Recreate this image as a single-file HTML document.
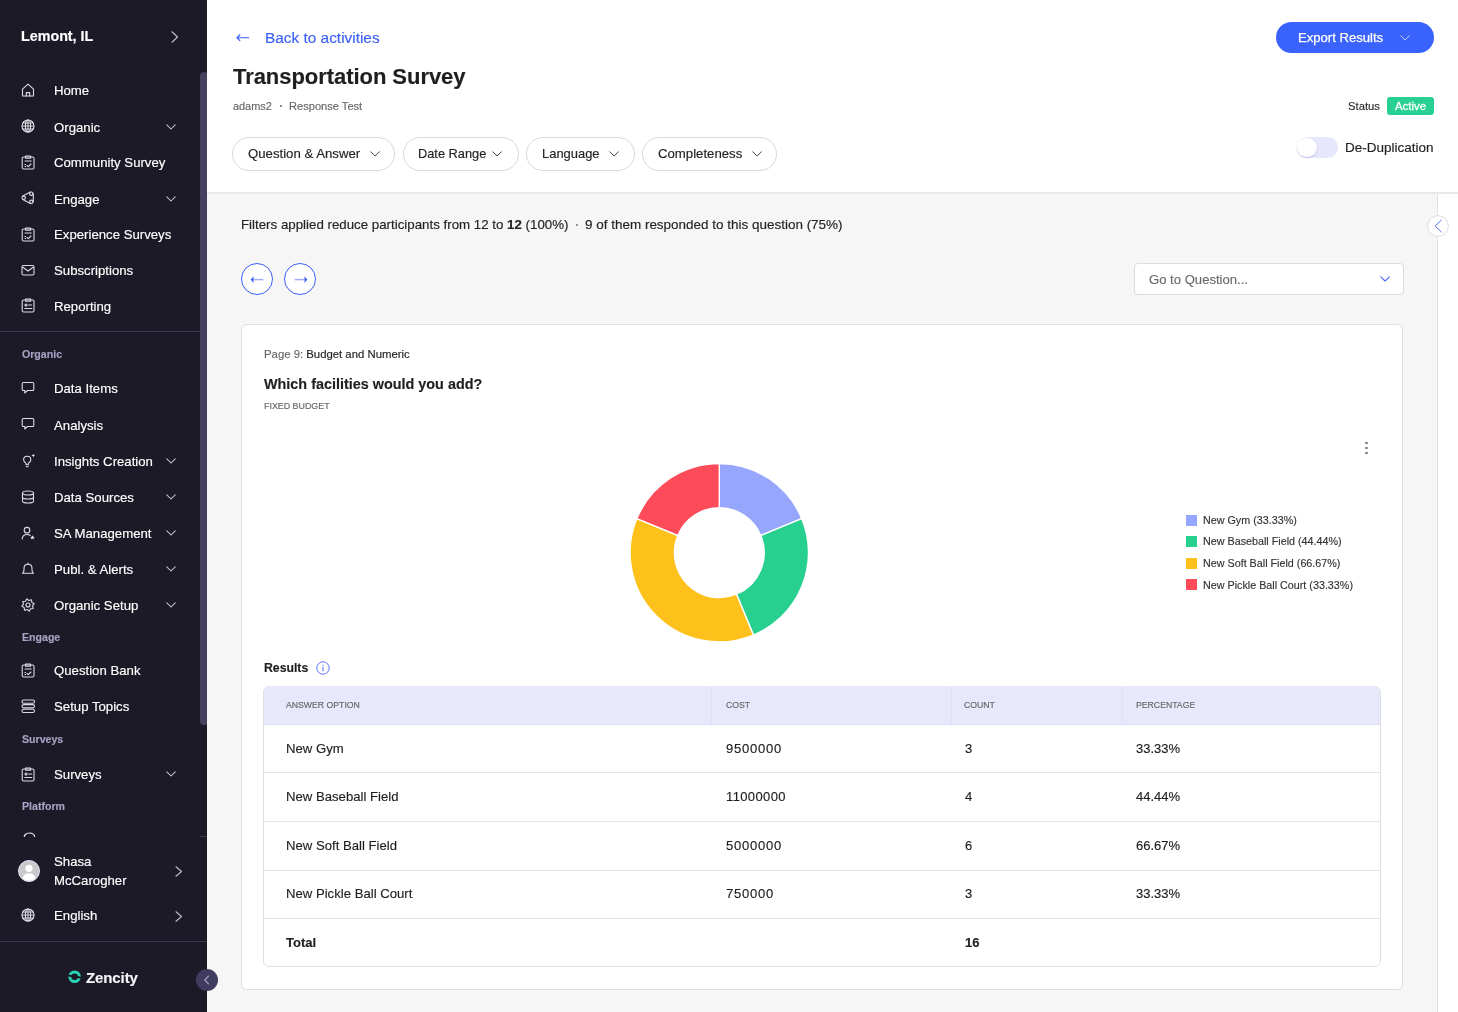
<!DOCTYPE html>
<html><head><meta charset="utf-8">
<style>
*{box-sizing:border-box;margin:0;padding:0}
html,body{width:1458px;height:1012px;overflow:hidden;background:#fff;font-family:"Liberation Sans",sans-serif;color:#1f1f1f;position:relative}
.a{position:absolute}
.t{position:absolute;white-space:nowrap;will-change:transform;-webkit-text-stroke-width:0.15px}
</style></head>
<body>
<div class="a" style="left:0px;top:0px;width:207px;height:1012px;background:#1c1a27"></div>
<div class="t " style="left:21px;top:29.10px;font-size:14.3px;line-height:14.3px;font-weight:bold;color:#fff;">Lemont, IL</div>
<svg class="a" style="left:171px;top:30.5px;" width="8" height="12" viewBox="0 0 8 12"><path d="M1 0.8 L6.5 6.0 L1 11.2" fill="none" stroke="#b9b9c4" stroke-width="1.2" stroke-linecap="round" stroke-linejoin="round"/></svg>
<svg class="a" style="left:20.8px;top:82.5px;" width="15" height="15" viewBox="0 0 15 15"><path d="M1.5 6.2 L7 1.2 L12.5 6.2 V13 H1.5 Z" fill="none" stroke="#dcdce4" stroke-width="1.1" stroke-linecap="round" stroke-linejoin="round"/><path d="M5.3 13 V9.6 H8.7 V13" fill="none" stroke="#dcdce4" stroke-width="1.1" stroke-linecap="round" stroke-linejoin="round"/></svg>
<div class="t " style="left:54.3px;top:83.83px;font-size:13.2px;line-height:13.2px;font-weight:normal;color:#fff;">Home</div>
<svg class="a" style="left:20.8px;top:119.30000000000001px;" width="15" height="15" viewBox="0 0 15 15"><circle cx="7" cy="7" r="6" fill="none" stroke="#dcdce4" stroke-width="1.1" stroke-linecap="round" stroke-linejoin="round"/><ellipse cx="7" cy="7" rx="2.6" ry="6" fill="none" stroke="#dcdce4" stroke-width="1.1" stroke-linecap="round" stroke-linejoin="round"/><path d="M1 7 H13 M1.8 4 H12.2 M1.8 10 H12.2 M7 1 V13" fill="none" stroke="#dcdce4" stroke-width="1.1" stroke-linecap="round" stroke-linejoin="round"/></svg>
<div class="t " style="left:54.3px;top:120.63px;font-size:13.2px;line-height:13.2px;font-weight:normal;color:#fff;">Organic</div>
<svg class="a" style="left:166px;top:123.60000000000001px;" width="10" height="6" viewBox="0 0 10 6"><path d="M0.8 0.8 L5.0 5 L9.2 0.8" fill="none" stroke="#c9c9d2" stroke-width="1.05" stroke-linecap="round" stroke-linejoin="round"/></svg>
<svg class="a" style="left:20.8px;top:154.5px;" width="15" height="15" viewBox="0 0 15 15"><rect x="1.2" y="2" width="11.8" height="12" rx="1.5" fill="none" stroke="#dcdce4" stroke-width="1.1" stroke-linecap="round" stroke-linejoin="round"/><path d="M4.6 1 H9.6 V3.2 H4.6 Z" fill="none" stroke="#dcdce4" stroke-width="1.1" stroke-linecap="round" stroke-linejoin="round"/><path d="M4 6 H10.2" fill="none" stroke="#dcdce4" stroke-width="1.1" stroke-linecap="round" stroke-linejoin="round"/><path d="M6 10.5 L7.3 11.6 L10 9" fill="none" stroke="#dcdce4" stroke-width="1.1" stroke-linecap="round" stroke-linejoin="round"/><path d="M4 9.5 h0.6 M4 11.5 h0.6" fill="none" stroke="#dcdce4" stroke-width="1.1" stroke-linecap="round" stroke-linejoin="round"/></svg>
<div class="t " style="left:54.3px;top:155.83px;font-size:13.2px;line-height:13.2px;font-weight:normal;color:#fff;">Community Survey</div>
<svg class="a" style="left:20.8px;top:191.3px;" width="15" height="15" viewBox="0 0 15 15"><path d="M1.75 5.04 L9.35 0.94 M1.77 8.57 L9.37 12.57 M12.3 2.7 V10.8" fill="none" stroke="#dcdce4" stroke-width="1.1" stroke-linecap="round" stroke-linejoin="round"/><circle cx="2.7" cy="6.8" r="1.7" fill="none" stroke="#dcdce4" stroke-width="1.1" stroke-linecap="round" stroke-linejoin="round"/><circle cx="10.3" cy="2.7" r="1.7" fill="none" stroke="#dcdce4" stroke-width="1.1" stroke-linecap="round" stroke-linejoin="round"/><circle cx="10.3" cy="10.8" r="1.7" fill="none" stroke="#dcdce4" stroke-width="1.1" stroke-linecap="round" stroke-linejoin="round"/></svg>
<div class="t " style="left:54.3px;top:192.63px;font-size:13.2px;line-height:13.2px;font-weight:normal;color:#fff;">Engage</div>
<svg class="a" style="left:166px;top:195.60000000000002px;" width="10" height="6" viewBox="0 0 10 6"><path d="M0.8 0.8 L5.0 5 L9.2 0.8" fill="none" stroke="#c9c9d2" stroke-width="1.05" stroke-linecap="round" stroke-linejoin="round"/></svg>
<svg class="a" style="left:20.8px;top:226.5px;" width="15" height="15" viewBox="0 0 15 15"><rect x="1.2" y="2" width="11.8" height="12" rx="1.5" fill="none" stroke="#dcdce4" stroke-width="1.1" stroke-linecap="round" stroke-linejoin="round"/><path d="M4.6 1 H9.6 V3.2 H4.6 Z" fill="none" stroke="#dcdce4" stroke-width="1.1" stroke-linecap="round" stroke-linejoin="round"/><path d="M4 6 H10.2" fill="none" stroke="#dcdce4" stroke-width="1.1" stroke-linecap="round" stroke-linejoin="round"/><path d="M6 10.5 L7.3 11.6 L10 9" fill="none" stroke="#dcdce4" stroke-width="1.1" stroke-linecap="round" stroke-linejoin="round"/><path d="M4 9.5 h0.6 M4 11.5 h0.6" fill="none" stroke="#dcdce4" stroke-width="1.1" stroke-linecap="round" stroke-linejoin="round"/></svg>
<div class="t " style="left:54.3px;top:227.83px;font-size:13.2px;line-height:13.2px;font-weight:normal;color:#fff;">Experience Surveys</div>
<svg class="a" style="left:20.8px;top:262.5px;" width="15" height="15" viewBox="0 0 15 15"><rect x="1" y="2.5" width="12" height="9.5" rx="1.5" fill="none" stroke="#dcdce4" stroke-width="1.1" stroke-linecap="round" stroke-linejoin="round"/><path d="M1.5 4 L7 8 L12.5 4" fill="none" stroke="#dcdce4" stroke-width="1.1" stroke-linecap="round" stroke-linejoin="round"/></svg>
<div class="t " style="left:54.3px;top:263.83px;font-size:13.2px;line-height:13.2px;font-weight:normal;color:#fff;">Subscriptions</div>
<svg class="a" style="left:20.8px;top:298.3px;" width="15" height="15" viewBox="0 0 15 15"><rect x="1.2" y="2" width="11.8" height="12" rx="1.5" fill="none" stroke="#dcdce4" stroke-width="1.1" stroke-linecap="round" stroke-linejoin="round"/><path d="M4.6 1 H9.6 V3.2 H4.6 Z" fill="none" stroke="#dcdce4" stroke-width="1.1" stroke-linecap="round" stroke-linejoin="round"/><path d="M7.5 7 H10.7 M3.8 10.5 H10.7" fill="none" stroke="#dcdce4" stroke-width="1.1" stroke-linecap="round" stroke-linejoin="round"/><circle cx="5" cy="7" r="1" fill="none" stroke="#dcdce4" stroke-width="1.1" stroke-linecap="round" stroke-linejoin="round"/></svg>
<div class="t " style="left:54.3px;top:299.63px;font-size:13.2px;line-height:13.2px;font-weight:normal;color:#fff;">Reporting</div>
<div class="a" style="left:0px;top:331px;width:200px;height:1px;background:#3b3754"></div>
<div class="t " style="left:21.8px;top:348.83px;font-size:10.6px;line-height:10.6px;font-weight:bold;color:#a6a2c4;">Organic</div>
<svg class="a" style="left:20.8px;top:381.0px;" width="15" height="15" viewBox="0 0 15 15"><path d="M2.5 1.5 H11.5 Q12.8 1.5 12.8 2.8 V8.2 Q12.8 9.5 11.5 9.5 H6.5 L3.8 12 V9.5 H2.5 Q1.2 9.5 1.2 8.2 V2.8 Q1.2 1.5 2.5 1.5 Z" fill="none" stroke="#dcdce4" stroke-width="1.1" stroke-linecap="round" stroke-linejoin="round"/></svg>
<div class="t " style="left:54.3px;top:382.33px;font-size:13.2px;line-height:13.2px;font-weight:normal;color:#fff;">Data Items</div>
<svg class="a" style="left:20.8px;top:417.2px;" width="15" height="15" viewBox="0 0 15 15"><path d="M2.5 1.5 H11.5 Q12.8 1.5 12.8 2.8 V8.2 Q12.8 9.5 11.5 9.5 H6.5 L3.8 12 V9.5 H2.5 Q1.2 9.5 1.2 8.2 V2.8 Q1.2 1.5 2.5 1.5 Z" fill="none" stroke="#dcdce4" stroke-width="1.1" stroke-linecap="round" stroke-linejoin="round"/></svg>
<div class="t " style="left:54.3px;top:418.53px;font-size:13.2px;line-height:13.2px;font-weight:normal;color:#fff;">Analysis</div>
<svg class="a" style="left:20.8px;top:454.0px;" width="15" height="15" viewBox="0 0 15 15"><path d="M5 10.8 V9.3 Q2.6 8 2.6 5.6 Q2.6 2.2 6.2 2.2 Q9.8 2.2 9.8 5.6 Q9.8 8 7.4 9.3 V10.8 Z" fill="none" stroke="#dcdce4" stroke-width="1.1" stroke-linecap="round" stroke-linejoin="round"/><path d="M5.2 12.8 H7.2" fill="none" stroke="#dcdce4" stroke-width="1.1" stroke-linecap="round" stroke-linejoin="round"/><path d="M12.3 -0.5 Q12.5 1.3 14.3 1.5 Q12.5 1.7 12.3 3.5 Q12.1 1.7 10.3 1.5 Q12.1 1.3 12.3 -0.5 Z" fill="#dcdce4"/></svg>
<div class="t " style="left:54.3px;top:455.33px;font-size:13.2px;line-height:13.2px;font-weight:normal;color:#fff;">Insights Creation</div>
<svg class="a" style="left:166px;top:458.3px;" width="10" height="6" viewBox="0 0 10 6"><path d="M0.8 0.8 L5.0 5 L9.2 0.8" fill="none" stroke="#c9c9d2" stroke-width="1.05" stroke-linecap="round" stroke-linejoin="round"/></svg>
<svg class="a" style="left:20.8px;top:490.1px;" width="15" height="15" viewBox="0 0 15 15"><ellipse cx="7" cy="3" rx="5.5" ry="2" fill="none" stroke="#dcdce4" stroke-width="1.1" stroke-linecap="round" stroke-linejoin="round"/><path d="M1.5 3 V11 Q1.5 13 7 13 Q12.5 13 12.5 11 V3 M1.5 7 Q1.5 9 7 9 Q12.5 9 12.5 7" fill="none" stroke="#dcdce4" stroke-width="1.1" stroke-linecap="round" stroke-linejoin="round"/></svg>
<div class="t " style="left:54.3px;top:491.43px;font-size:13.2px;line-height:13.2px;font-weight:normal;color:#fff;">Data Sources</div>
<svg class="a" style="left:166px;top:494.40000000000003px;" width="10" height="6" viewBox="0 0 10 6"><path d="M0.8 0.8 L5.0 5 L9.2 0.8" fill="none" stroke="#c9c9d2" stroke-width="1.05" stroke-linecap="round" stroke-linejoin="round"/></svg>
<svg class="a" style="left:20.8px;top:526.1px;" width="15" height="15" viewBox="0 0 15 15"><circle cx="6" cy="4.2" r="2.8" fill="none" stroke="#dcdce4" stroke-width="1.1" stroke-linecap="round" stroke-linejoin="round"/><path d="M1.2 13 Q1.5 8.5 6 8.5 Q8 8.5 9.2 9.5" fill="none" stroke="#dcdce4" stroke-width="1.1" stroke-linecap="round" stroke-linejoin="round"/><path d="M11.5 9.3 L12.2 10.8 L13.8 10.9 L12.6 11.9 L13 13.5 L11.5 12.6 L10 13.5 L10.4 11.9 L9.2 10.9 L10.8 10.8 Z" fill="#e8e8ee"/></svg>
<div class="t " style="left:54.3px;top:527.43px;font-size:13.2px;line-height:13.2px;font-weight:normal;color:#fff;">SA Management</div>
<svg class="a" style="left:166px;top:530.4px;" width="10" height="6" viewBox="0 0 10 6"><path d="M0.8 0.8 L5.0 5 L9.2 0.8" fill="none" stroke="#c9c9d2" stroke-width="1.05" stroke-linecap="round" stroke-linejoin="round"/></svg>
<svg class="a" style="left:20.8px;top:561.9px;" width="15" height="15" viewBox="0 0 15 15"><path d="M1.5 11.3 H12.5 Q11 10 11 8 V6.3 Q11 2.2 7 2.2 Q3 2.2 3 6.3 V8 Q3 10 1.5 11.3 Z" fill="none" stroke="#dcdce4" stroke-width="1.1" stroke-linecap="round" stroke-linejoin="round"/><path d="M7 1 V2.2" fill="none" stroke="#dcdce4" stroke-width="1.1" stroke-linecap="round" stroke-linejoin="round"/></svg>
<div class="t " style="left:54.3px;top:563.23px;font-size:13.2px;line-height:13.2px;font-weight:normal;color:#fff;">Publ. &amp; Alerts</div>
<svg class="a" style="left:166px;top:566.1999999999999px;" width="10" height="6" viewBox="0 0 10 6"><path d="M0.8 0.8 L5.0 5 L9.2 0.8" fill="none" stroke="#c9c9d2" stroke-width="1.05" stroke-linecap="round" stroke-linejoin="round"/></svg>
<svg class="a" style="left:20.8px;top:598.1px;" width="15" height="15" viewBox="0 0 15 15"><path d="M13.18 5.77 L11.51 7.90 L12.24 10.50 L9.56 10.82 L8.23 13.18 L6.10 11.51 L3.50 12.24 L3.18 9.56 L0.82 8.23 L2.49 6.10 L1.76 3.50 L4.44 3.18 L5.77 0.82 L7.90 2.49 L10.50 1.76 L10.82 4.44 Z" fill="none" stroke="#dcdce4" stroke-width="1.1" stroke-linecap="round" stroke-linejoin="round"/><circle cx="7" cy="7" r="2" fill="none" stroke="#dcdce4" stroke-width="1.1" stroke-linecap="round" stroke-linejoin="round"/></svg>
<div class="t " style="left:54.3px;top:599.43px;font-size:13.2px;line-height:13.2px;font-weight:normal;color:#fff;">Organic Setup</div>
<svg class="a" style="left:166px;top:602.4px;" width="10" height="6" viewBox="0 0 10 6"><path d="M0.8 0.8 L5.0 5 L9.2 0.8" fill="none" stroke="#c9c9d2" stroke-width="1.05" stroke-linecap="round" stroke-linejoin="round"/></svg>
<div class="t " style="left:21.8px;top:631.83px;font-size:10.6px;line-height:10.6px;font-weight:bold;color:#a6a2c4;">Engage</div>
<svg class="a" style="left:20.8px;top:662.7px;" width="15" height="15" viewBox="0 0 15 15"><rect x="1.2" y="2" width="11.8" height="12" rx="1.5" fill="none" stroke="#dcdce4" stroke-width="1.1" stroke-linecap="round" stroke-linejoin="round"/><path d="M4.6 1 H9.6 V3.2 H4.6 Z" fill="none" stroke="#dcdce4" stroke-width="1.1" stroke-linecap="round" stroke-linejoin="round"/><path d="M4 6 H10.2" fill="none" stroke="#dcdce4" stroke-width="1.1" stroke-linecap="round" stroke-linejoin="round"/><path d="M6 10.5 L7.3 11.6 L10 9" fill="none" stroke="#dcdce4" stroke-width="1.1" stroke-linecap="round" stroke-linejoin="round"/><path d="M4 9.5 h0.6 M4 11.5 h0.6" fill="none" stroke="#dcdce4" stroke-width="1.1" stroke-linecap="round" stroke-linejoin="round"/></svg>
<div class="t " style="left:54.3px;top:664.03px;font-size:13.2px;line-height:13.2px;font-weight:normal;color:#fff;">Question Bank</div>
<svg class="a" style="left:20.8px;top:698.9px;" width="15" height="15" viewBox="0 0 15 15"><rect x="1" y="1" width="12.5" height="3.3" rx="1.6" fill="none" stroke="#dcdce4" stroke-width="1.1" stroke-linecap="round" stroke-linejoin="round"/><rect x="1" y="5.6" width="12.5" height="3.3" rx="1.6" fill="none" stroke="#dcdce4" stroke-width="1.1" stroke-linecap="round" stroke-linejoin="round"/><rect x="1" y="10.2" width="12.5" height="3.3" rx="1.6" fill="none" stroke="#dcdce4" stroke-width="1.1" stroke-linecap="round" stroke-linejoin="round"/></svg>
<div class="t " style="left:54.3px;top:700.23px;font-size:13.2px;line-height:13.2px;font-weight:normal;color:#fff;">Setup Topics</div>
<div class="t " style="left:21.8px;top:733.63px;font-size:10.6px;line-height:10.6px;font-weight:bold;color:#a6a2c4;">Surveys</div>
<svg class="a" style="left:20.8px;top:766.5px;" width="15" height="15" viewBox="0 0 15 15"><rect x="1.2" y="2" width="11.8" height="12" rx="1.5" fill="none" stroke="#dcdce4" stroke-width="1.1" stroke-linecap="round" stroke-linejoin="round"/><path d="M4.6 1 H9.6 V3.2 H4.6 Z" fill="none" stroke="#dcdce4" stroke-width="1.1" stroke-linecap="round" stroke-linejoin="round"/><path d="M7.5 7 H10.7 M3.8 10.5 H10.7" fill="none" stroke="#dcdce4" stroke-width="1.1" stroke-linecap="round" stroke-linejoin="round"/><circle cx="5" cy="7" r="1" fill="none" stroke="#dcdce4" stroke-width="1.1" stroke-linecap="round" stroke-linejoin="round"/></svg>
<div class="t " style="left:54.3px;top:767.83px;font-size:13.2px;line-height:13.2px;font-weight:normal;color:#fff;">Surveys</div>
<svg class="a" style="left:166px;top:770.8px;" width="10" height="6" viewBox="0 0 10 6"><path d="M0.8 0.8 L5.0 5 L9.2 0.8" fill="none" stroke="#c9c9d2" stroke-width="1.05" stroke-linecap="round" stroke-linejoin="round"/></svg>
<div class="t " style="left:21.8px;top:800.73px;font-size:10.6px;line-height:10.6px;font-weight:bold;color:#a6a2c4;">Platform</div>
<div class="a" style="left:0;top:826px;width:200px;height:10.5px;overflow:hidden">
<svg class="a" style="left:21.5px;top:6px" width="15" height="15" viewBox="0 0 15 15"><path d="M2 7 Q2 1 7.5 1 Q13 1 13 7" fill="none" stroke="#e8e8ee" stroke-width="1.2"/></svg>
</div>
<div class="a" style="left:200px;top:72px;width:8px;height:653px;background:#47415f;border-radius:4px"></div>
<div class="a" style="left:200px;top:835.5px;width:8px;height:1.2px;background:#3b3754"></div>
<div class="a" style="left:206.5px;top:72px;width:1.5px;height:764px;background:#2c2a3c"></div>
<svg class="a" style="left:18px;top:860px" width="22" height="22" viewBox="0 0 22 22"><circle cx="11" cy="11" r="10.5" fill="#c9c9cc" stroke="#dfe3f5" stroke-width="1"/><circle cx="11" cy="8.3" r="3.6" fill="#fff"/><path d="M4.3 18.2 Q6 13.2 11 13.2 Q16 13.2 17.7 18.2 Q14.8 20.8 11 20.8 Q7.2 20.8 4.3 18.2 Z" fill="#fff"/></svg>
<div class="t " style="left:54.3px;top:854.83px;font-size:13.2px;line-height:13.2px;font-weight:normal;color:#fff;">Shasa</div>
<div class="t " style="left:54.3px;top:873.73px;font-size:13.2px;line-height:13.2px;font-weight:normal;color:#fff;">McCarogher</div>
<svg class="a" style="left:174.5px;top:865.5px;" width="8" height="11" viewBox="0 0 8 11"><path d="M1 0.8 L6.5 5.5 L1 10.2" fill="none" stroke="#b9b9c4" stroke-width="1.2" stroke-linecap="round" stroke-linejoin="round"/></svg>
<svg class="a" style="left:20.8px;top:908px;" width="15" height="15" viewBox="0 0 15 15"><circle cx="7" cy="7" r="6" fill="none" stroke="#dcdce4" stroke-width="1.1" stroke-linecap="round" stroke-linejoin="round"/><ellipse cx="7" cy="7" rx="2.6" ry="6" fill="none" stroke="#dcdce4" stroke-width="1.1" stroke-linecap="round" stroke-linejoin="round"/><path d="M1 7 H13 M1.8 4 H12.2 M1.8 10 H12.2 M7 1 V13" fill="none" stroke="#dcdce4" stroke-width="1.1" stroke-linecap="round" stroke-linejoin="round"/></svg>
<div class="t " style="left:54.3px;top:908.73px;font-size:13.2px;line-height:13.2px;font-weight:normal;color:#fff;">English</div>
<svg class="a" style="left:174.5px;top:910.5px;" width="8" height="11" viewBox="0 0 8 11"><path d="M1 0.8 L6.5 5.5 L1 10.2" fill="none" stroke="#b9b9c4" stroke-width="1.2" stroke-linecap="round" stroke-linejoin="round"/></svg>
<div class="a" style="left:0px;top:940.5px;width:207px;height:1.2px;background:#3b3754"></div>
<svg class="a" style="left:68px;top:970px" width="14" height="14" viewBox="0 0 14 14"><circle cx="6.6" cy="6.8" r="4.8" fill="none" stroke="#2bd3b5" stroke-width="3"/><path d="M-1 4.3 L15 6.9 L15 9.0 L-1 6.4 Z" fill="#1c1a27"/></svg>
<div class="t " style="left:85.5px;top:969.80px;font-size:15px;line-height:15px;font-weight:bold;color:#f4f4f6;letter-spacing:-0.1px">Zencity</div>
<div class="a" style="left:207px;top:0px;width:1251px;height:193px;background:#fff"></div>
<div class="a" style="left:207px;top:192px;width:1251px;height:2px;background:#e8e8e8"></div>
<div class="a" style="left:207px;top:194px;width:1231px;height:818px;background:#f6f6f6"></div>
<div class="a" style="left:1437px;top:194px;width:1.2px;height:818px;background:#e2e2e2"></div>
<div class="a" style="left:1438.2px;top:194px;width:20px;height:818px;background:#fff"></div>
<svg class="a" style="left:235px;top:32px;" width="16" height="11" viewBox="0 0 16 11"><path d="M2.3 5.7 H13.8" stroke="#3a60f7" stroke-width="1.1" stroke-linecap="round"/><path d="M4.8 3 L2.1 5.7 L4.8 8.6" fill="none" stroke="#3a60f7" stroke-width="1.3" stroke-linecap="round" stroke-linejoin="round"/></svg>
<div class="t " style="left:264.9px;top:29.96px;font-size:15.4px;line-height:15.4px;font-weight:normal;color:#3a60f7;">Back to activities</div>
<div class="t " style="left:232.5px;top:65.88px;font-size:22px;line-height:22px;font-weight:bold;color:#1f1f1f;letter-spacing:-0.05px">Transportation Survey</div>
<div class="t " style="left:232.6px;top:101.17px;font-size:10.9px;line-height:10.9px;font-weight:normal;color:#666;">adams2</div>
<div class="a" style="left:280.2px;top:105.3px;width:1.6px;height:1.6px;background:#666;border-radius:1px"></div>
<div class="t " style="left:289.2px;top:101.00px;font-size:11.1px;line-height:11.1px;font-weight:normal;color:#666;">Response Test</div>
<div class="a" style="left:232.2px;top:137px;width:163.2px;height:33.5px;border:1px solid #d9d9d9;border-radius:17px;background:#fff"></div>
<div class="t " style="left:247.6px;top:146.73px;font-size:13.19px;line-height:13.19px;font-weight:normal;color:#222;">Question &amp; Answer</div>
<svg class="a" style="left:369.5px;top:151.2px;" width="10.2" height="6" viewBox="0 0 10.2 6"><path d="M0.8 0.8 L5.1 5 L9.399999999999999 0.8" fill="none" stroke="#444" stroke-width="1.0" stroke-linecap="round" stroke-linejoin="round"/></svg>
<div class="a" style="left:403px;top:137px;width:115.60000000000002px;height:33.5px;border:1px solid #d9d9d9;border-radius:17px;background:#fff"></div>
<div class="t " style="left:418.4px;top:147.96px;font-size:12.8px;line-height:12.8px;font-weight:normal;color:#222;">Date Range</div>
<svg class="a" style="left:492.0px;top:151.2px;" width="10.2" height="6" viewBox="0 0 10.2 6"><path d="M0.8 0.8 L5.1 5 L9.399999999999999 0.8" fill="none" stroke="#444" stroke-width="1.0" stroke-linecap="round" stroke-linejoin="round"/></svg>
<div class="a" style="left:526px;top:137px;width:108.79999999999995px;height:33.5px;border:1px solid #d9d9d9;border-radius:17px;background:#fff"></div>
<div class="t " style="left:541.7px;top:147.84px;font-size:12.95px;line-height:12.95px;font-weight:normal;color:#222;">Language</div>
<svg class="a" style="left:609.3000000000001px;top:151.2px;" width="10.2" height="6" viewBox="0 0 10.2 6"><path d="M0.8 0.8 L5.1 5 L9.399999999999999 0.8" fill="none" stroke="#444" stroke-width="1.0" stroke-linecap="round" stroke-linejoin="round"/></svg>
<div class="a" style="left:642.2px;top:137px;width:135.19999999999993px;height:33.5px;border:1px solid #d9d9d9;border-radius:17px;background:#fff"></div>
<div class="t " style="left:658px;top:146.73px;font-size:13.2px;line-height:13.2px;font-weight:normal;color:#222;">Completeness</div>
<svg class="a" style="left:751.9000000000001px;top:151.2px;" width="10.2" height="6" viewBox="0 0 10.2 6"><path d="M0.8 0.8 L5.1 5 L9.399999999999999 0.8" fill="none" stroke="#444" stroke-width="1.0" stroke-linecap="round" stroke-linejoin="round"/></svg>
<div class="a" style="left:1276px;top:22px;width:157.6px;height:30.6px;background:#3a62fd;border-radius:16px"></div>
<div class="t " style="left:1297.7px;top:31.41px;font-size:13.1px;line-height:13.1px;font-weight:normal;color:#fff;-webkit-text-stroke:0.25px #fff">Export Results</div>
<svg class="a" style="left:1399.5px;top:35px;" width="10.2" height="6" viewBox="0 0 10.2 6"><path d="M0.8 0.8 L5.1 5 L9.399999999999999 0.8" fill="none" stroke="#d5defe" stroke-width="0.9" stroke-linecap="round" stroke-linejoin="round"/></svg>
<div class="t " style="left:1347.8px;top:100.98px;font-size:11.25px;line-height:11.25px;font-weight:normal;color:#2a2a2a;">Status</div>
<div class="a" style="left:1387px;top:97px;width:46.6px;height:18px;background:#28d193;border-radius:3px"></div>
<div class="t " style="left:1394.8px;top:100.65px;font-size:11.4px;line-height:11.4px;font-weight:normal;color:#fff;-webkit-text-stroke:0.3px #fff">Active</div>
<div class="a" style="left:1297px;top:137px;width:40.7px;height:21px;background:#e6e6fc;border-radius:11px"></div>
<div class="a" style="left:1297.2px;top:137.7px;width:19.5px;height:19.5px;background:#fff;border-radius:50%;box-shadow:0 1px 1.5px rgba(110,110,200,0.35)"></div>
<div class="t " style="left:1345px;top:141.07px;font-size:13.5px;line-height:13.5px;font-weight:normal;color:#222;">De-Duplication</div>
<svg class="a" style="left:1427px;top:215px" width="22" height="22" viewBox="0 0 22 22"><circle cx="11" cy="11" r="10.3" fill="#fff" stroke="#dedede" stroke-width="1"/><path d="M14.2 5.2 L8.2 11 L14.2 16.8" fill="none" stroke="#4f6cf7" stroke-width="1.0" stroke-linecap="round" stroke-linejoin="round"/></svg>
<div class="t " style="left:240.8px;top:218.14px;font-size:13.3px;line-height:13.3px;font-weight:normal;color:#222;">Filters applied reduce participants from 12 to <b>12</b> (100%)</div>
<div class="a" style="left:576.3px;top:224.2px;width:1.8px;height:1.8px;background:#777;border-radius:1px"></div>
<div class="t " style="left:585.2px;top:218.00px;font-size:13.47px;line-height:13.47px;font-weight:normal;color:#222;">9 of them responded to this question (75%)</div>
<div class="a" style="left:240.8px;top:262.8px;width:32.4px;height:32.4px;background:#fff;border:1px solid #3d5ef8;border-radius:50%"></div>
<svg class="a" style="left:240.5px;top:262.5px" width="33" height="33" viewBox="0 0 33 33"><path d="M10.5 16.6 H22.3" stroke="#9fadfb" stroke-width="1.5"/><path d="M9.6 16.6 L12.8 13.2 L12.2 16.6 L12.8 20 Z" fill="#3d5ef8"/></svg>
<div class="a" style="left:283.8px;top:262.8px;width:32.4px;height:32.4px;background:#fff;border:1px solid #3d5ef8;border-radius:50%"></div>
<svg class="a" style="left:283.5px;top:262.5px" width="33" height="33" viewBox="0 0 33 33"><path d="M10.7 16.6 H22.5" stroke="#9fadfb" stroke-width="1.5"/><path d="M23.4 16.6 L20.2 13.2 L20.8 16.6 L20.2 20 Z" fill="#3d5ef8"/></svg>
<div class="a" style="left:1133.5px;top:263.3px;width:270px;height:31.3px;background:#fff;border:1px solid #dcdcdc;border-radius:4px"></div>
<div class="t " style="left:1149px;top:273.11px;font-size:13.1px;line-height:13.1px;font-weight:normal;color:#6b6b6b;">Go to Question...</div>
<svg class="a" style="left:1380.3px;top:275.8px;" width="10.2" height="6" viewBox="0 0 10.2 6"><path d="M0.8 0.8 L5.1 5 L9.399999999999999 0.8" fill="none" stroke="#4d6af7" stroke-width="1.1" stroke-linecap="round" stroke-linejoin="round"/></svg>
<div class="a" style="left:241px;top:324.4px;width:1162px;height:666px;background:#fff;border:1px solid #dedede;border-radius:6px"></div>
<div class="t " style="left:263.7px;top:348.99px;font-size:11.35px;line-height:11.35px;font-weight:normal;color:#222;"><span style="color:#666">Page 9:</span> Budget and Numeric</div>
<div class="t " style="left:263.7px;top:377.21px;font-size:14.4px;line-height:14.4px;font-weight:bold;color:#1f1f1f;">Which facilities would you add?</div>
<div class="t " style="left:263.7px;top:401.77px;font-size:8.9px;line-height:8.9px;font-weight:normal;color:#666;">FIXED BUDGET</div>
<div class="a" style="left:1365.2px;top:441.7px;width:2.6px;height:2.6px;background:#7a7a7a;border-radius:50%"></div>
<div class="a" style="left:1365.2px;top:446.7px;width:2.6px;height:2.6px;background:#7a7a7a;border-radius:50%"></div>
<div class="a" style="left:1365.2px;top:451.7px;width:2.6px;height:2.6px;background:#7a7a7a;border-radius:50%"></div>
<svg class="a" style="left:0;top:0" width="1458" height="1012"><path d="M719.30 463.50 A89.2 89.2 0 0 1 801.71 518.56 L760.78 535.52 A44.9 44.9 0 0 0 719.30 507.80 Z" fill="#97a6fd" stroke="#fff" stroke-width="1.4" stroke-linejoin="miter"/><path d="M801.71 518.56 A89.2 89.2 0 0 1 753.44 635.11 L736.48 594.18 A44.9 44.9 0 0 0 760.78 535.52 Z" fill="#27d08f" stroke="#fff" stroke-width="1.4" stroke-linejoin="miter"/><path d="M753.44 635.11 A89.2 89.2 0 0 1 636.89 518.56 L677.82 535.52 A44.9 44.9 0 0 0 736.48 594.18 Z" fill="#fec11b" stroke="#fff" stroke-width="1.4" stroke-linejoin="miter"/><path d="M636.89 518.56 A89.2 89.2 0 0 1 719.30 463.50 L719.30 507.80 A44.9 44.9 0 0 0 677.82 535.52 Z" fill="#fe4b5a" stroke="#fff" stroke-width="1.4" stroke-linejoin="miter"/></svg>
<div class="a" style="left:1186px;top:514.8px;width:11px;height:11px;background:#97a6fd"></div>
<div class="t " style="left:1203.3px;top:514.90px;font-size:10.75px;line-height:10.75px;font-weight:normal;color:#333;">New Gym (33.33%)</div>
<div class="a" style="left:1186px;top:536.3499999999999px;width:11px;height:11px;background:#27d08f"></div>
<div class="t " style="left:1203.3px;top:536.45px;font-size:10.75px;line-height:10.75px;font-weight:normal;color:#333;">New Baseball Field (44.44%)</div>
<div class="a" style="left:1186px;top:557.9px;width:11px;height:11px;background:#fec11b"></div>
<div class="t " style="left:1203.3px;top:558.00px;font-size:10.75px;line-height:10.75px;font-weight:normal;color:#333;">New Soft Ball Field (66.67%)</div>
<div class="a" style="left:1186px;top:579.4499999999999px;width:11px;height:11px;background:#fe4b5a"></div>
<div class="t " style="left:1203.3px;top:579.55px;font-size:10.75px;line-height:10.75px;font-weight:normal;color:#333;">New Pickle Ball Court (33.33%)</div>
<div class="t " style="left:263.5px;top:661.73px;font-size:12.25px;line-height:12.25px;font-weight:bold;color:#1f1f1f;">Results</div>
<svg class="a" style="left:315.5px;top:661.3px" width="14" height="14" viewBox="0 0 14 14"><circle cx="7" cy="7" r="6.2" fill="none" stroke="#5a74f7" stroke-width="1"/><path d="M7 6 V10.3" stroke="#5a74f7" stroke-width="1.1"/><circle cx="7" cy="4.1" r="0.7" fill="#5a74f7"/></svg>
<div class="a" style="left:263px;top:685.8px;width:1117.5px;height:281.20000000000005px;background:#fff;border:1px solid #e0e0e0;border-radius:6px;overflow:hidden"></div>
<div class="a" style="left:263.5px;top:686.3px;width:1116.5px;height:38px;background:#e7e8fc;border-radius:6px 6px 0 0"></div>
<div class="a" style="left:710.7px;top:686.8px;width:1px;height:37.5px;background:#dfe0f6"></div>
<div class="a" style="left:950.7px;top:686.8px;width:1px;height:37.5px;background:#dfe0f6"></div>
<div class="a" style="left:1121.5px;top:686.8px;width:1px;height:37.5px;background:#dfe0f6"></div>
<div class="a" style="left:263.5px;top:723.5px;width:1116.5px;height:1px;background:#dcdff5"></div>
<div class="t " style="left:286.4px;top:700.74px;font-size:8.7px;line-height:8.7px;font-weight:normal;color:#666;">ANSWER OPTION</div>
<div class="t " style="left:725.8px;top:700.74px;font-size:8.7px;line-height:8.7px;font-weight:normal;color:#666;">COST</div>
<div class="t " style="left:964.4px;top:700.74px;font-size:8.7px;line-height:8.7px;font-weight:normal;color:#666;">COUNT</div>
<div class="t " style="left:1135.7px;top:700.74px;font-size:8.7px;line-height:8.7px;font-weight:normal;color:#666;">PERCENTAGE</div>
<div class="t " style="left:286.4px;top:741.87px;font-size:13.15px;line-height:13.15px;font-weight:normal;color:#1e1e1e;">New Gym</div>
<div class="t " style="left:725.8px;top:742.00px;font-size:13px;line-height:13px;font-weight:normal;color:#1e1e1e;letter-spacing:0.78px">9500000</div>
<div class="t " style="left:965px;top:742.00px;font-size:13px;line-height:13px;font-weight:normal;color:#1e1e1e;">3</div>
<div class="t " style="left:1135.7px;top:742.00px;font-size:13px;line-height:13px;font-weight:normal;color:#1e1e1e;">33.33%</div>
<div class="a" style="left:263.5px;top:772.3px;width:1116.5px;height:1px;background:#e4e4e4"></div>
<div class="t " style="left:286.4px;top:790.32px;font-size:13.15px;line-height:13.15px;font-weight:normal;color:#1e1e1e;">New Baseball Field</div>
<div class="t " style="left:725.8px;top:790.45px;font-size:13px;line-height:13px;font-weight:normal;color:#1e1e1e;letter-spacing:0.38px">11000000</div>
<div class="t " style="left:965px;top:790.45px;font-size:13px;line-height:13px;font-weight:normal;color:#1e1e1e;">4</div>
<div class="t " style="left:1135.7px;top:790.45px;font-size:13px;line-height:13px;font-weight:normal;color:#1e1e1e;">44.44%</div>
<div class="a" style="left:263.5px;top:820.9px;width:1116.5px;height:1px;background:#e4e4e4"></div>
<div class="t " style="left:286.4px;top:838.77px;font-size:13.15px;line-height:13.15px;font-weight:normal;color:#1e1e1e;">New Soft Ball Field</div>
<div class="t " style="left:725.8px;top:838.90px;font-size:13px;line-height:13px;font-weight:normal;color:#1e1e1e;letter-spacing:0.78px">5000000</div>
<div class="t " style="left:965px;top:838.90px;font-size:13px;line-height:13px;font-weight:normal;color:#1e1e1e;">6</div>
<div class="t " style="left:1135.7px;top:838.90px;font-size:13px;line-height:13px;font-weight:normal;color:#1e1e1e;">66.67%</div>
<div class="a" style="left:263.5px;top:869.5px;width:1116.5px;height:1px;background:#e4e4e4"></div>
<div class="t " style="left:286.4px;top:887.22px;font-size:13.15px;line-height:13.15px;font-weight:normal;color:#1e1e1e;">New Pickle Ball Court</div>
<div class="t " style="left:725.8px;top:887.35px;font-size:13px;line-height:13px;font-weight:normal;color:#1e1e1e;letter-spacing:0.78px">750000</div>
<div class="t " style="left:965px;top:887.35px;font-size:13px;line-height:13px;font-weight:normal;color:#1e1e1e;">3</div>
<div class="t " style="left:1135.7px;top:887.35px;font-size:13px;line-height:13px;font-weight:normal;color:#1e1e1e;">33.33%</div>
<div class="a" style="left:263.5px;top:918.0999999999999px;width:1116.5px;height:1px;background:#e4e4e4"></div>
<div class="t " style="left:286.4px;top:935.80px;font-size:13px;line-height:13px;font-weight:bold;color:#222;">Total</div>
<div class="t " style="left:965px;top:935.80px;font-size:13px;line-height:13px;font-weight:bold;color:#222;">16</div>
<svg class="a" style="left:196px;top:969px" width="22" height="22" viewBox="0 0 22 22"><circle cx="11" cy="11" r="11" fill="#403c5f"/><path d="M12.5 7.2 L8.8 11 L12.5 14.8" fill="none" stroke="#a7a3c4" stroke-width="1.2" stroke-linecap="round" stroke-linejoin="round"/></svg>
</body></html>
